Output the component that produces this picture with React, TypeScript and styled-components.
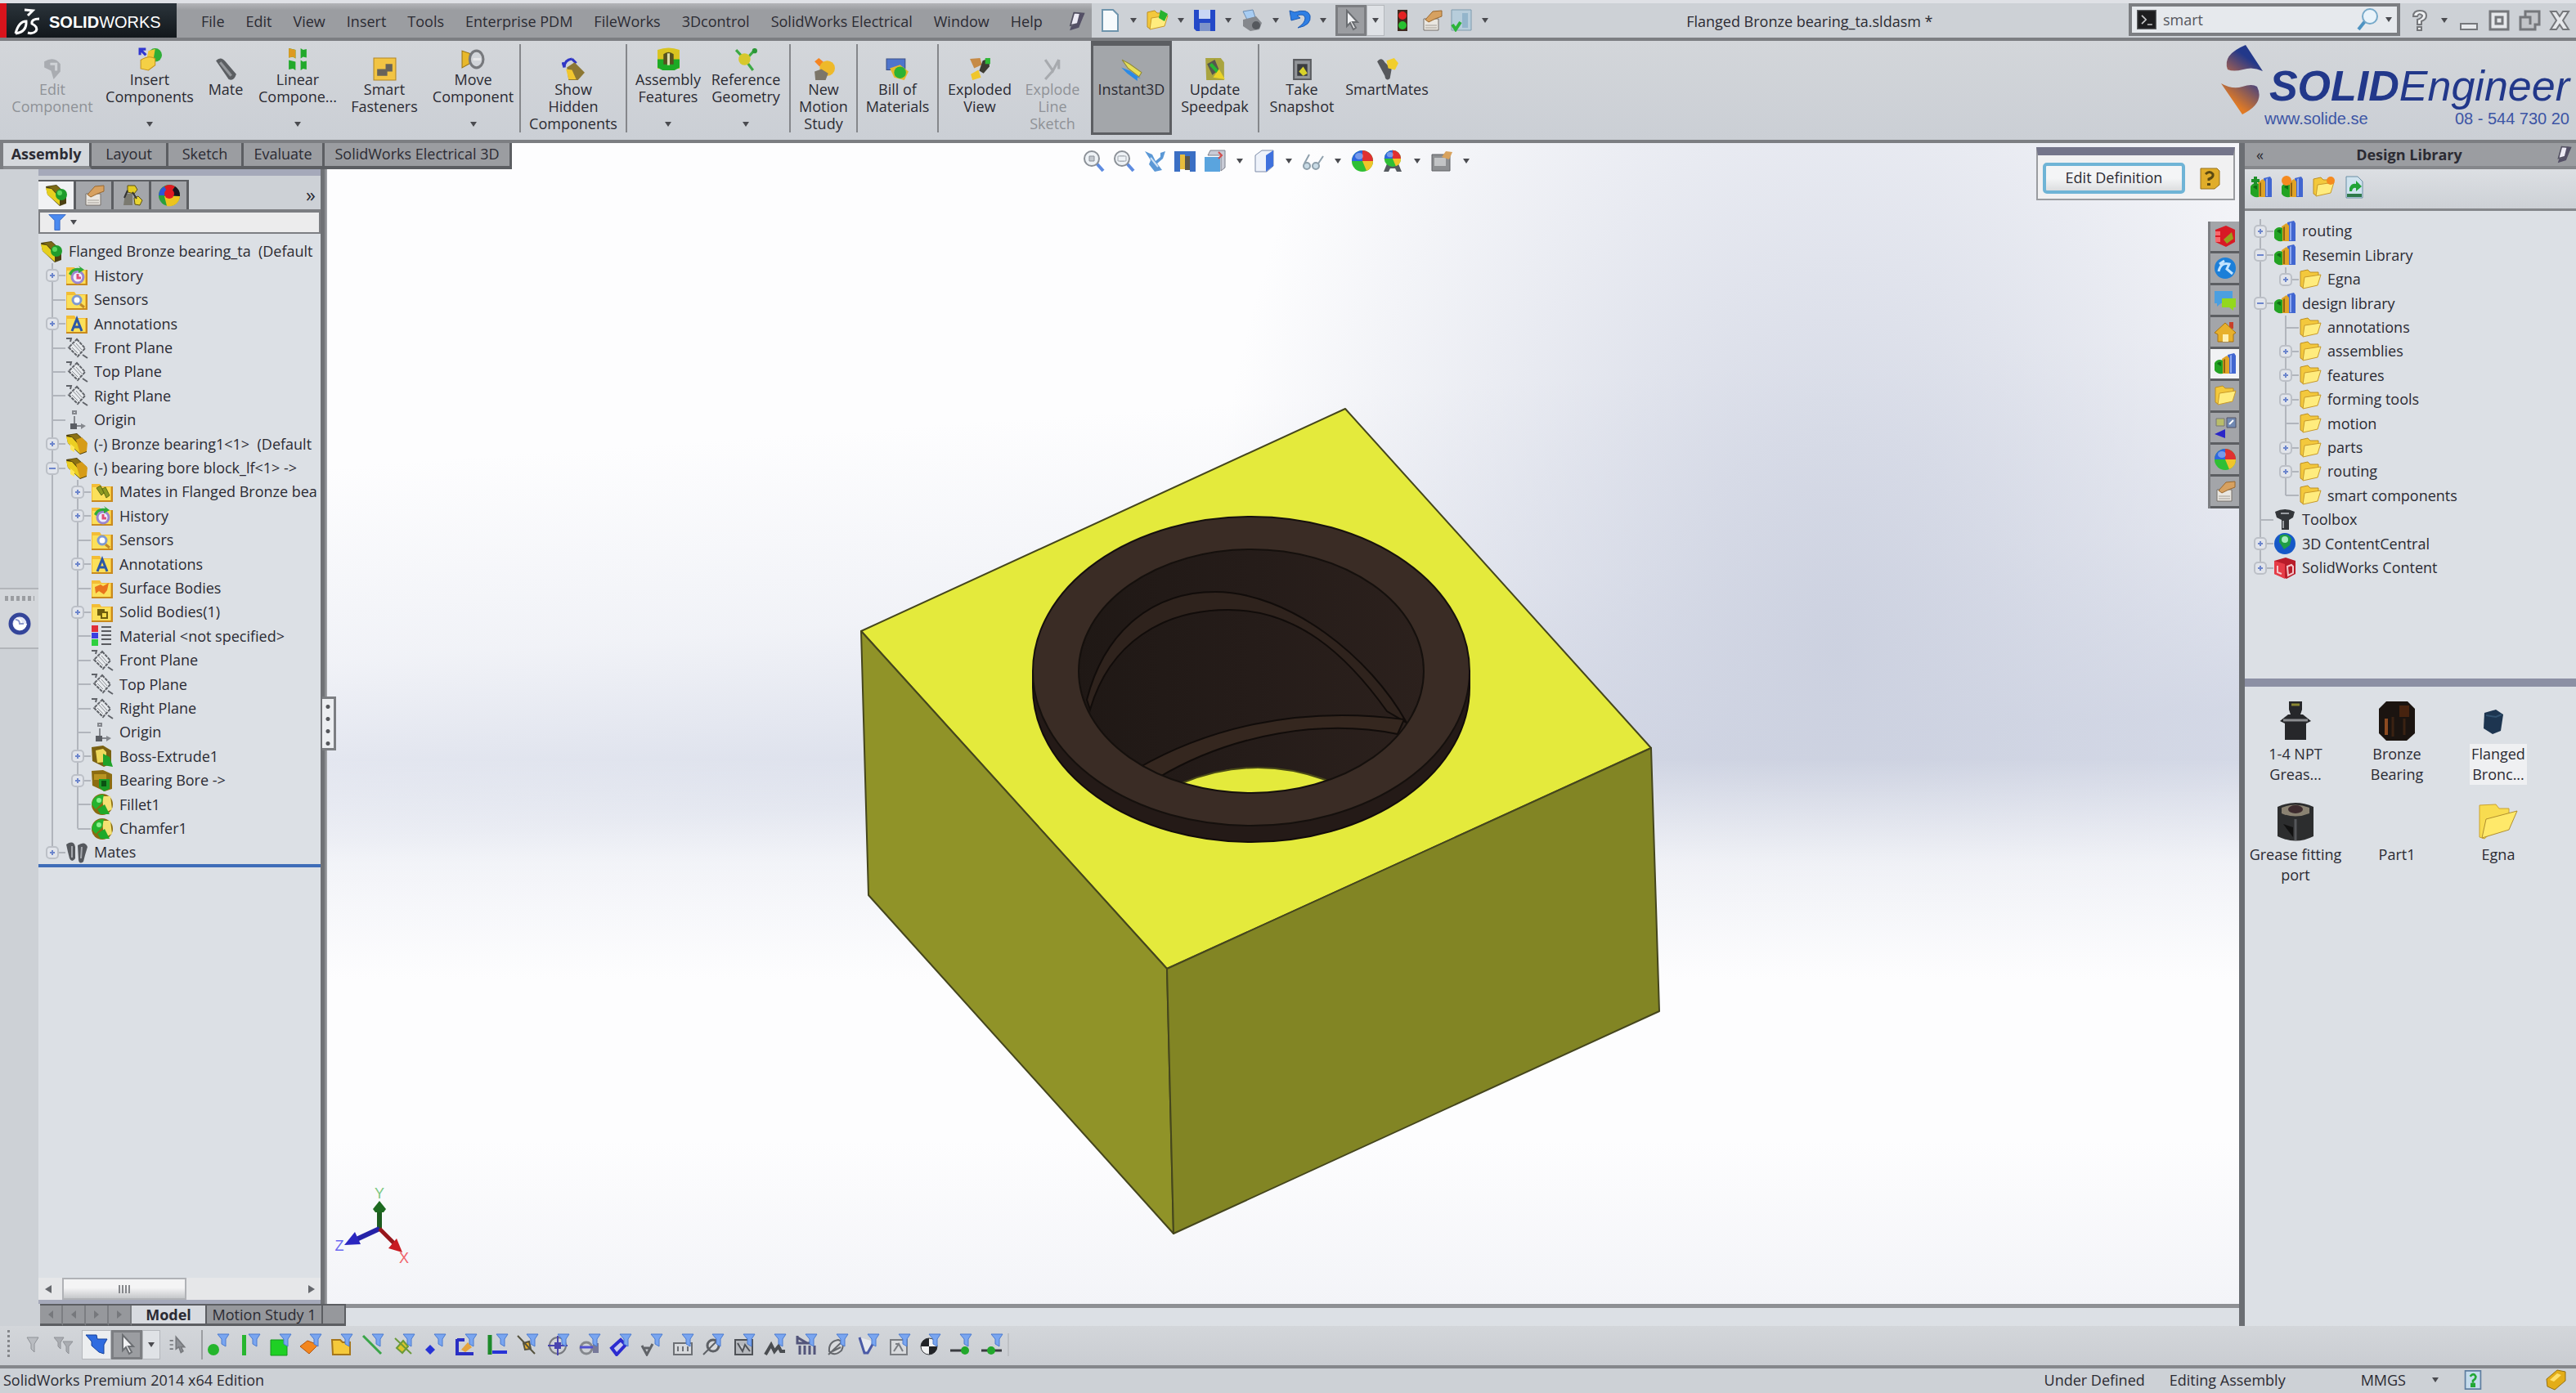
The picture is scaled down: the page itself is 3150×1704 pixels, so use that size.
import React from "react";
import styled, { createGlobalStyle, css } from "styled-components";

const ui = `"Open Sans", "Noto Sans", "Liberation Sans", sans-serif`;
const c = {
  chrome: "#cdd1d6",
  panel: "#dce0e5",
  bar: "#9b9da1",
  line: "#7c7e82",
  dark: "#5c5e62",
  text: "#2b2b33",
  lilac: "#a5a9ba",
};

const Global = createGlobalStyle`
  * { box-sizing: border-box; }
  body { margin: 0; background: ${c.chrome}; color: ${c.text}; font: 18px/21px ${ui}; }
  button { font: inherit; color: inherit; background: none; border: 0; padding: 0; margin: 0; }
  ul { list-style: none; margin: 0; padding: 0; }
  svg { display: block; flex: none; }
`;

/* ---------- drawings, all on a 28 x 28 grid ---------- */

const FolderBack = () => (
  <>
    <path d="M1 4h10l2 3h14v19H1z" fill="#f3bd35" />
    <path d="M2 8h22v16H2z" fill="#fbe05a" />
    <path d="M25 7h2v19H1v-2h24z" fill="#c98a1e" />
  </>
);
const Blade = () => (
  <path d="M13 1h14l-4 6v9l-5-3V7z" fill="#7aa6f0" stroke="#4a7ad0" strokeWidth="1" />
);
const Books = () => (
  <>
    <path d="M17 3l8-2 2 3v22h-9z" fill="#4166d0" />
    <path d="M20 4l2-1v22h-2z" fill="#8da8f0" />
    <path d="M10 8l6-4 3 3v19h-8z" fill="#e0a326" />
    <path d="M12 9l2-1v17h-2z" fill="#8d6312" />
    <path d="M1 13q4-6 10-3v16q-7 1-10-4z" fill="#23a323" />
    <path d="M4 14q2-3 5-2v5z" fill="#0f6d14" />
  </>
);
const OpenFolder = () => (
  <>
    <path d="M2 4l9-2 3 3h10v8L5 24 2 22z" fill="#f3c83c" stroke="#bd8f22" />
    <path d="M7 11l20-3-4 13-18 4z" fill="#ffec7e" stroke="#c99a2a" />
  </>
);
const Block = ({ a, b, d }: { a: string; b: string; d: string }) => (
  <>
    <path d="M1 3l13-2 12 11v12l-8 3L3 13z" fill={d} />
    <path d="M1 5l7 1 10 11v9L3 13z" fill={a} />
    <path d="M4 3l10-1 10 9-6 4-9-9z" fill={b} />
  </>
);
const Ball = () => (
  <>
    <circle cx="14" cy="14" r="13" fill="#2fbf35" />
    <path d="M14 14V1a13 13 0 0 0-13 13z" fill="#2e66df" />
    <path d="M14 14V1a13 13 0 0 1 13 13z" fill="#e03030" />
    <path d="M14 14h13a13 13 0 0 1-8 12z" fill="#f0c52a" />
    <ellipse cx="10" cy="8" rx="5" ry="4" fill="#fff" opacity=".35" />
  </>
);
const Hand = () => (
  <>
    <path d="M4 12h18v14H4z" fill="#e9e6e0" stroke="#77716a" />
    <path d="M6 20h14M6 23h14" stroke="#a39d96" />
    <path d="M6 13l9-10 11-1v7l-8 3-8 4z" fill="#d7a160" stroke="#99682f" />
  </>
);
const Lens = () => (
  <>
    <path d="M17 17l8 9" stroke="#5e8be0" strokeWidth="4" />
    <circle cx="11" cy="11" r="9" fill="#eef2f6" stroke="#8b9097" strokeWidth="2" />
    <path d="M8 8h6v6H8z" fill="#c3c8ce" stroke="#8b9097" />
  </>
);

const icons: Record<string, React.ReactNode> = {
  assembly: (
    <>
      <Block a="#e5cf1f" b="#7c6a15" d="#4d4112" />
      <circle cx="20" cy="13" r="7" fill="#1f9c2c" />
      <circle cx="18" cy="11" r="3" fill="#5ad65e" />
    </>
  ),
  part: (
    <>
      <Block a="#eccf22" b="#8b7114" d="#4d3e0c" />
      <path d="M13 9l7-3 7 7-1 10-8 3z" fill="#d69c18" />
      <path d="M6 14l5 4v6l-5-3z" fill="#ffe75a" />
    </>
  ),
  hand: <Hand />,
  config: (
    <>
      <path d="M6 12h9v14H4z" fill="#7b7a70" />
      <path d="M9 2h9l3 5-4 5-8-2z" fill="#e3cb22" stroke="#5c5110" />
      <path d="M17 17l5-2 5 5-3 6-6-1z" fill="#e9d532" stroke="#5c5110" />
      <path d="M15 10l5 8M9 8l-4 9" stroke="#333" strokeWidth="2" />
    </>
  ),
  ball: <Ball />,
  ball2: (
    <>
      <circle cx="14" cy="14" r="13" fill="#2a9f3c" />
      <path d="M14 14L1 14A13 13 0 0 1 8 3z" fill="#2e55d8" />
      <path d="M14 14L8 3a13 13 0 0 1 13 0z" fill="#e01a22" />
      <path d="M14 14l7-11a13 13 0 0 1 6 12z" fill="#1b1320" />
      <path d="M8 15h19a13 13 0 0 1-16 12z" fill="#edc41d" />
      <circle cx="14" cy="12" r="6" fill="#e01a22" />
    </>
  ),
  scene: (
    <>
      <path d="M3 27l5-12h12l5 12h-6l-2-4h-6l-2 4z" fill="#555a60" />
      <g transform="translate(3 0) scale(.78)"><Ball /></g>
    </>
  ),
  history: (
    <>
      <FolderBack />
      <circle cx="15" cy="16" r="7" fill="#eef" stroke="#9a86d0" strokeWidth="3" />
      <path d="M4 12q4-9 14-7l-2-3 7 5-7 4v-3q-7-1-9 6z" fill="#2faa38" />
      <path d="M15 12v5h4" stroke="#e04f7a" strokeWidth="3" fill="none" />
    </>
  ),
  sensors: (
    <>
      <FolderBack />
      <circle cx="14" cy="14" r="5" fill="#fff" stroke="#7f9ad2" strokeWidth="3" />
      <path d="M18 19l5 4" stroke="#c08a2a" strokeWidth="3" />
    </>
  ),
  annotations: (
    <>
      <FolderBack />
      <path d="M8 23l6-15 6 15M10 18h8" stroke="#2c57a6" strokeWidth="3" fill="none" />
    </>
  ),
  matesIn: (
    <>
      <FolderBack />
      <path d="M7 9l5-3 4 9-3 3zM14 10l4-2 5 10-4 3z" fill="#8c9a22" stroke="#5f6d14" strokeWidth="1" />
    </>
  ),
  surface: (
    <>
      <FolderBack />
      <path d="M5 12l7-3 3 2 7-4-2 9-4 5-6-4-4 3z" fill="#e8741c" />
    </>
  ),
  solid: (
    <>
      <FolderBack />
      <path d="M8 10h9v3h4v9h-9v-4H8z" fill="#6f5f0d" />
      <path d="M14 15h5v5h-5z" fill="#f5dd4a" />
    </>
  ),
  material: (
    <>
      <path d="M1 1h8v8H1z" fill="#e02f38" />
      <path d="M1 10h8v7H1z" fill="#3a3fe0" />
      <path d="M1 18h8v8H1z" fill="#2ed03f" />
      <path d="M13 3h12M13 8h12M13 13h12M13 18h12M13 24h12" stroke="#5a5c60" strokeWidth="2" />
    </>
  ),
  plane: (
    <>
      <path d="M14 3l10 11-9 10L4 13z" fill="#e8ebee" stroke="#5f6268" strokeWidth="2" strokeDasharray="4 1" />
      <path d="M9 8l10 11M13 8l7 8M8 13l7 7" stroke="#8b8e94" strokeWidth="1" />
      <path d="M1 2h6l-1 4M21 22l6 4" stroke="#5f6268" strokeWidth="2" fill="none" />
    </>
  ),
  origin: (
    <>
      <path d="M11 9v12h9M9 3h4v3H9z" stroke="#85888e" strokeWidth="2" fill="none" />
      <path d="M6 18h8v7H6z" fill="#5a5d63" />
      <path d="M19 18l6 3-6 4z" fill="#85888e" />
    </>
  ),
  extrude: (
    <>
      <path d="M1 3l14-2 10 6v16l-9 4L2 20z" fill="#7a6112" />
      <path d="M6 7l9-2 4 4v12l-11 1z" fill="#eed95c" />
      <path d="M15 11l8 4 4 12-12-2z" fill="#1fa32a" />
    </>
  ),
  bore: (
    <>
      <path d="M1 2l14-1 11 5v18l-9 3L2 20z" fill="#8c6c11" />
      <path d="M4 6h15v7H4z" fill="#b99421" />
      <path d="M10 12h13v12l-7 3-6-5z" fill="#1c9a26" />
      <path d="M13 14h6v7h-6z" fill="#0a5212" />
    </>
  ),
  fillet: (
    <>
      <circle cx="14" cy="14" r="13" fill="#8a6a10" />
      <path d="M14 4h10l2 16-10 5z" fill="#f4e172" />
      <path d="M1 14Q3 2 16 2l-2 10-8 8z" fill="#25b32f" />
      <path d="M8 20l9-6 6 12H12z" fill="#1fa929" />
      <circle cx="10" cy="9" r="3" fill="#8bf08c" />
    </>
  ),
  mates: (
    <>
      <path d="M1 4q9-6 11 3v14q-4 6-7 0l-2-8z" fill="#55585d" />
      <path d="M15 5q9-6 12 2l-3 10-2 8q-5 4-6-2z" fill="#55585d" />
      <path d="M8 6v14M20 7l-1 14" stroke="#a5a8ad" strokeWidth="2" />
    </>
  ),
  books: <Books />,
  booksAdd: (<><Books /><path d="M7 1v10M2 6h10" stroke="#1d8f28" strokeWidth="4" /></>),
  booksNew: (<><Books /><circle cx="7" cy="6" r="6" fill="#f58a1f" /></>),
  folder: <OpenFolder />,
  folderNew: (<><OpenFolder /><circle cx="23" cy="6" r="5" fill="#f58a1f" /></>),
  refresh: (
    <>
      <path d="M4 1h14l6 6v20H4z" fill="#cfe3ee" stroke="#6a8ea4" />
      <path d="M8 19v-4q2-6 8-5V6l7 7-7 6v-4q-4-1-5 4z" fill="#21a437" />
      <path d="M5 22h18v4H5z" fill="#2e7a4a" />
    </>
  ),
  toolbox: (
    <>
      <path d="M2 4q12-6 24 0l-2 7-5 3v12h-9V14l-6-3z" fill="#33363a" />
      <path d="M9 6h10M12 15v9" stroke="#9b9ea3" strokeWidth="2" />
    </>
  ),
  globe: (
    <>
      <circle cx="14" cy="14" r="13" fill="#1558c8" />
      <path d="M8 4q10-4 14 4l-2 8-7 5-6-9z" fill="#1f9e45" />
      <circle cx="14" cy="9" r="4" fill="#a3ecc0" />
    </>
  ),
  cube: (
    <>
      <path d="M1 5l14-4 12 4v16l-11 6L1 21z" fill="#b81c29" />
      <path d="M1 5l13 4v18L1 21z" fill="#e63c47" />
      <path d="M5 11v8l5 2M17 12l5-2 2 2v8l-6 3z" stroke="#f3c7ca" strokeWidth="2" fill="none" />
    </>
  ),
  resources: (
    <>
      <path d="M2 6l13-5 11 5v15l-11 6L2 21z" fill="#d81a25" />
      <path d="M2 8h6v5H2zM2 15h6v6H2z" fill="#f7686d" />
      <path d="M12 18l10-9 2 8-8 6z" fill="#9aa01c" />
    </>
  ),
  web: (
    <>
      <circle cx="14" cy="14" r="13" fill="#1c7fd8" />
      <path d="M6 18q3-12 13-9l-3 6 7 6M7 9l6-4" stroke="#c3e4ff" strokeWidth="3" fill="none" />
    </>
  ),
  chat: (
    <>
      <path d="M1 3h22v15H9l-5 4v-4H1z" fill="#4b9fe0" />
      <path d="M10 12h17v11h-3v4l-5-4h-9z" fill="#93d81f" />
    </>
  ),
  house: (
    <>
      <path d="M19 2h5v8h-5z" fill="#c8402a" />
      <path d="M1 15L14 3l13 12-3 2v9H5v-9z" fill="#e7b02c" stroke="#a87412" />
      <path d="M11 17h7v9h-7z" fill="#fff0b4" />
    </>
  ),
  palette: (
    <>
      <path d="M3 3h10v9H3z" fill="#b9bd6a" stroke="#777" />
      <path d="M16 2h11v12H16z" fill="#7189b2" stroke="#556" />
      <path d="M19 10l5-5" stroke="#fff" strokeWidth="2" />
      <path d="M1 22l13-6v11z" fill="#2a25c8" />
    </>
  ),
  editPart: (
    <>
      <path d="M4 5q12-7 19 3v9l-8 9-3-10-8-4z" fill="#a9acb1" />
      <path d="M11 8h7v8" stroke="#cfd2d6" strokeWidth="3" fill="none" />
    </>
  ),
  insert: (
    <>
      <path d="M2 9V2h7M2 2l7 7" stroke="#3137cf" strokeWidth="3" fill="none" />
      <circle cx="20" cy="9" r="8" fill="#2fae36" />
      <path d="M12 4l8-2-2 12h-8z" fill="#f0c734" />
      <path d="M3 15q9-6 17-2v8l-8 6-9-2z" fill="#f5d045" stroke="#c5941d" />
    </>
  ),
  mate: (
    <>
      <path d="M2 4q6-6 12 2l12 14q-3 9-9 6z" fill="#5b5e62" />
      <path d="M7 6l13 16" stroke="#93969a" strokeWidth="3" />
    </>
  ),
  pattern: (
    <>
      <path d="M3 1l8 2v10l-3-2-5 1zM3 15l8 2v10l-3-2-5 1z" fill="#22a92b" />
      <path d="M3 1l8 2v10l-3-2-5 1z" fill="#dd9a22" />
      <path d="M17 1l3 2 4-1v10l-4-1-3 2zM17 15l3 2 4-1v10l-4-1-3 2z" fill="#22a92b" />
    </>
  ),
  fasteners: (
    <>
      <path d="M1 1h26v26H1z" fill="#f2c443" stroke="#b48620" />
      <path d="M5 14h10V8h8v9h-6v5H5z" fill="#67635a" />
    </>
  ),
  move: (
    <>
      <path d="M1 4l9 3v12l-9 5z" fill="#e8b82a" stroke="#9a7414" />
      <ellipse cx="18" cy="14" rx="8" ry="10" fill="none" stroke="#77797d" strokeWidth="3" />
      <path d="M14 14h9" stroke="#e8e8ea" strokeWidth="3" />
    </>
  ),
  hidden: (
    <>
      <path d="M3 12q0-9 9-10M3 12L1 6M12 2l5 5" stroke="#3036c6" strokeWidth="3" fill="none" />
      <path d="M6 12l9-6 12 12-8 9H8z" fill="#8c7734" />
      <path d="M5 14l7 1 5 11H8z" fill="#f0c62e" />
    </>
  ),
  features: (
    <>
      <path d="M1 3q13-5 26 0v22H1z" fill="#d9c420" />
      <path d="M1 14h26v10l-6 3H7l-6-3z" fill="#1cab25" />
      <path d="M8 8q6-5 12 0v12H8z" fill="#55521f" />
      <path d="M14 7v14" stroke="#dcdcae" strokeWidth="3" />
    </>
  ),
  geometry: (
    <>
      <path d="M2 3l11 12L25 2M13 15l9 12" stroke="#3ba944" strokeWidth="3" fill="none" />
      <circle cx="12" cy="14" r="7" fill="#d7c82b" />
      <circle cx="24" cy="4" r="3" fill="#2a9736" />
    </>
  ),
  motion: (
    <>
      <path d="M3 5l5-4 6 5-5 5z" fill="#f58420" />
      <circle cx="18" cy="13" r="9" fill="#eeb92a" />
      <path d="M3 17l8-3 8 5-3 8H4z" fill="#7c7669" />
    </>
  ),
  bom: (
    <>
      <path d="M1 2h22v13H1z" fill="#4e74cc" stroke="#394f85" />
      <path d="M5 13l12-4 10 8-5 10-12-3z" fill="#e5b92c" />
      <circle cx="17" cy="18" r="7" fill="#2bb233" />
    </>
  ),
  explode: (
    <>
      <path d="M2 2l12-1 2 8-9 4z" fill="#c68a46" />
      <path d="M17 4l8-3v10l-7 8-5-3z" fill="#3c3a33" />
      <path d="M20 1h6v7h-6z" fill="#2eb736" />
      <path d="M3 20l9-5 3 9-10 3z" fill="#efc62c" />
    </>
  ),
  explodeLine: (
    <path d="M5 3l9 13 7-13M14 16L5 26M21 3v11" stroke="#a7aaae" strokeWidth="3" fill="none" />
  ),
  instant: (
    <>
      <path d="M3 3l9 5 14 10-3 5L10 13z" fill="#e7df5a" stroke="#8f8936" />
      <path d="M2 12l10 4 13 9-4-1v4l-12-9z" fill="#2b8ae6" />
    </>
  ),
  speedpak: (
    <>
      <path d="M3 1h18l4 5v21H4z" fill="#a9a43f" />
      <path d="M5 8l9-5 5 12-8 6z" fill="#55564f" />
      <path d="M9 8l9 10" stroke="#28b532" strokeWidth="4" />
      <path d="M12 24l7-10 7 12z" fill="#ead326" />
    </>
  ),
  snapshot: (
    <>
      <path d="M4 3h20v23H4z" fill="#929599" stroke="#5a5c60" strokeWidth="2" />
      <path d="M8 8h12v14H8z" fill="#3b3d40" />
      <path d="M10 17l5-6 5 8-5 3z" fill="#d9d22a" />
    </>
  ),
  smartMates: (
    <>
      <path d="M2 5q5-6 9 1l8 8-2 11q-5 4-6-3z" fill="#56585c" />
      <path d="M13 4l9-3 5 6-4 8-8-2z" fill="#f2ce2c" />
    </>
  ),
  doc: <path d="M5 1h13l6 6v20H5z" fill="#f6fafc" stroke="#6f95ad" strokeWidth="2" />,
  open: (<><OpenFolder /><path d="M18 1l9 5-4 9-7-4z" fill="#27b32f" /></>),
  save: (
    <>
      <path d="M1 1h26v26H4l-3-3z" fill="#2449c8" />
      <path d="M7 1h14v11H7z" fill="#c9d6f5" />
      <path d="M8 17h13v10H8z" fill="#7d93c9" />
    </>
  ),
  print: (
    <>
      <path d="M3 3l12-2 3 9-10 3z" fill="#a7ccf2" stroke="#6c8cb0" />
      <path d="M3 13l16-4 7 8-3 8-11 2-9-6z" fill="#85888d" />
      <circle cx="19" cy="20" r="5" fill="#55585d" />
    </>
  ),
  undo: (
    <path d="M2 2l2 12 11-3-4-3q9-3 10 3 0 6-9 12 17-3 15-15Q24-1 8 4z" fill="#2f7fe4" stroke="#1e5cb4" />
  ),
  cursor: <path d="M9 2v19l4-4 4 8 3-2-4-7h6z" fill="#f1f2f4" stroke="#6b6e72" strokeWidth="2" />,
  traffic: (
    <>
      <path d="M8 1h12v26H8z" fill="#3e2b20" />
      <circle cx="14" cy="8" r="5" fill="#e42222" />
      <circle cx="14" cy="20" r="5" fill="#27c030" />
    </>
  ),
  chart: (
    <>
      <path d="M2 1h24v25H2z" fill="#b7cddb" stroke="#7f9bae" />
      <path d="M15 5h7v18h-7z" fill="#93b5cb" />
      <path d="M3 19l4 6 6-9" stroke="#2cb43a" strokeWidth="4" fill="none" />
    </>
  ),
  pin: (
    <>
      <path d="M12 2l14 1-7 14-12 3z" fill="#eceaf4" stroke="#525061" strokeWidth="2" />
      <path d="M20 2l7 1-8 20-13 4 2-6 8-3z" fill="#545066" />
    </>
  ),
  lens: <Lens />,
  lens2: (<><Lens /><path d="M6 8h10v6H6z" fill="#eef2f6" stroke="#a4a9b0" /></>),
  lensBlue: (
    <>
      <path d="M3 26l8-10" stroke="#4e93c2" strokeWidth="4" />
      <circle cx="17" cy="10" r="9" fill="#e9f3fa" stroke="#76a9c9" strokeWidth="2" />
    </>
  ),
  rotate: (
    <>
      <path d="M2 2l9 4 4 8 6-5V4l6-2-3 9-7 6 6 8-9 2-7-9 2-5z" fill="#5b98d6" />
      <path d="M9 10l9 11" stroke="#cfe2f5" strokeWidth="2" />
    </>
  ),
  section: (
    <>
      <path d="M1 2h26v7H1z" fill="#3b6fc4" />
      <path d="M1 9h7v18H1zM20 9h7v18h-7z" fill="#3b6fc4" />
      <path d="M8 6h6v18H8z" fill="#e8bd3c" />
      <path d="M14 8h6v17h-6z" fill="#5a564a" />
    </>
  ),
  view: (
    <>
      <path d="M8 1h18v21l-5 4V7H5z" fill="#c8cbd6" stroke="#7d808c" />
      <path d="M1 9h19v18H1z" fill="#5aa4de" />
      <path d="M18 3l4 4-4 4" stroke="#d24b4b" strokeWidth="2" fill="none" />
    </>
  ),
  display: (
    <>
      <path d="M3 7l8-6h14v19l-8 7H3z" fill="#eef2fa" stroke="#7d8ba8" />
      <path d="M16 7l9-6v19l-9 7z" fill="#3f71dd" />
    </>
  ),
  glasses: (
    <>
      <circle cx="6" cy="20" r="4" fill="#c9dbe6" stroke="#8fa0ac" strokeWidth="2" />
      <circle cx="17" cy="20" r="4" fill="#c9dbe6" stroke="#8fa0ac" strokeWidth="2" />
      <path d="M3 17L9 6M20 17l6-9" stroke="#8fa0ac" strokeWidth="2" />
    </>
  ),
  settings: (
    <>
      <path d="M2 6h22v20H2z" fill="#8d8f92" stroke="#5f6164" />
      <path d="M5 10h14v10H5z" fill="#c2c4c6" />
      <path d="M14 9l5-7 8 1-4 9z" fill="#d8a25d" />
    </>
  ),
  keycard: (
    <>
      <path d="M3 2h20l3 3v17l-6 5H3z" fill="#e0ad2a" stroke="#97701a" />
      <path d="M9 9q5-5 9 0 1 4-5 6v2" stroke="#5c4a12" strokeWidth="3" fill="none" />
      <path d="M11 20h4v3h-4z" fill="#5c4a12" />
    </>
  ),
  terminal: (
    <>
      <path d="M0 0h28v28H0z" fill="#1d1d1f" stroke="#5f6164" strokeWidth="3" />
      <path d="M7 8l6 6-6 6M15 21h7" stroke="#c8c8ca" strokeWidth="2" fill="none" />
    </>
  ),
  help: (
    <path d="M6 9q0-7 8-7t8 6q0 5-6 7v4h-5v-6q6-2 6-5-4-4-6 1zM11 22h5v4h-5z" fill="#eef0f2" stroke="#75777b" strokeWidth="2" />
  ),
  min: <path d="M4 18h20v7H4z" fill="#e6e8eb" stroke="#75777b" strokeWidth="2" />,
  max: <path d="M3 3h22v22H3zM10 10h8v8h-8z" fill="#e6e8eb" stroke="#75777b" strokeWidth="3" />,
  restore: <path d="M9 3h17v16h-5v6H3V10h6zM9 10h6v9" fill="#c2c4c8" stroke="#75777b" strokeWidth="3" />,
  close: <path d="M3 3h7l4 6 4-6h7l-7 11 7 11h-7l-4-6-4 6H3l7-11z" fill="#e6e8eb" stroke="#75777b" strokeWidth="2" />,
  funnel: <path d="M1 2h26l-9 9v15h-8V11z" fill="#4a8af0" stroke="#2b5bb8" />,
  ring: (
    <>
      <circle cx="14" cy="14" r="11" fill="#e3e6f6" stroke="#34459a" strokeWidth="5" />
      <path d="M10 7q7 0 7 7h6q-1 6-7 8-9-1-10-8z" fill="#fff" />
      <path d="M9 9q5 0 5 5h5" stroke="#8d98cc" strokeWidth="2" fill="none" />
    </>
  ),
  statusHelp: (
    <>
      <path d="M3 1h22v26H3z" fill="#c5dcec" stroke="#5f7ea0" strokeWidth="2" />
      <path d="M10 9q5-6 8 0 0 4-4 6v3M12 20h4v3h-4z" stroke="#22a836" strokeWidth="3" fill="none" />
    </>
  ),
  tag: (
    <>
      <path d="M2 13L15 2l10 2v11L12 26 3 22z" fill="#e3ad18" stroke="#96700e" />
      <path d="M6 14l9-8 5 2-9 8z" fill="#ffe06a" />
    </>
  ),
  fOff: <path d="M7 5h14l-5 8v10l-4-4v-6z" fill="#b9bcc1" stroke="#8f9297" />,
  fClear: <path d="M3 5h12l-4 6v8l-3-3v-5zM14 10h12l-5 6v9l-3-3v-6z" fill="#aaadb2" stroke="#8f9297" />,
  fAll: <path d="M1 2h13l1 5h12l-4 7v11l-6-2-9-8v-5z" fill="#2f6ce0" stroke="#17429c" />,
  fCursor: <path d="M3 8h5M3 14h5M3 20h5M12 3v17l4-3 3 8 3-2-3-6h5z" fill="#8f9297" stroke="#77797d" strokeWidth="2" />,
};

const filterShapes: React.ReactNode[] = [
  <circle cx="8" cy="20" r="7" fill="#24b52c" />,
  <path d="M5 2h5v25H5z" fill="#27b62f" />,
  <path d="M2 8h20v19H2z" fill="#1fd024" stroke="#15951a" />,
  <path d="M1 16l9-7 13 5-11 11z" fill="#f3861e" stroke="#b3560d" />,
  <path d="M2 8h10l3 3h9v15H3z" fill="#f5c93b" stroke="#a6761a" strokeWidth="2" />,
  <path d="M2 3l22 22" stroke="#3aa548" strokeWidth="3" />,
  <path d="M3 6l20 19M13 9l6 7-7 8-7-6z" fill="#dcc62b" stroke="#6a9a3a" strokeWidth="2" />,
  <path d="M8 14l6 6-6 6-6-6z" fill="#2733d6" />,
  <><path d="M3 8h9M3 7v18h20" fill="none" stroke="#2a2fc4" strokeWidth="4" /><path d="M8 20l8-9 5 6-8 6z" fill="#e5a33c" /></>,
  <><path d="M5 2v24" stroke="#1d8a2a" strokeWidth="5" /><path d="M8 23h18" stroke="#2733d6" strokeWidth="4" /></>,
  <path d="M2 3l21 22M9 12l7-2 2 9-7 1z" fill="#e9b02b" stroke="#55523e" strokeWidth="2" />,
  <><circle cx="13" cy="15" r="10" fill="none" stroke="#77797f" strokeWidth="2" /><path d="M13 3v24M1 15h24" stroke="#4a45b0" strokeWidth="2" /><path d="M9 11h8v8H9z" fill="#4a45b0" /></>,
  <><circle cx="10" cy="18" r="7" fill="none" stroke="#85888d" strokeWidth="3" /><path d="M2 17h18" stroke="#5050d0" strokeWidth="3" /><path d="M18 12h7v12h-7z" fill="#77799a" /></>,
  <path d="M3 18L14 8l6 6-11 12z" fill="#c9ccef" stroke="#2b2bd0" strokeWidth="4" />,
  <path d="M2 15l6 11 7-13M5 18h6" fill="none" stroke="#606368" strokeWidth="3" />,
  <path d="M3 12h22v14H3zM8 16v6M14 16v6M20 16v6" fill="#d8dadd" stroke="#6d7075" strokeWidth="2" />,
  <><circle cx="14" cy="15" r="7" fill="#d8dadd" stroke="#5d6065" strokeWidth="3" /><path d="M2 26L20 8" stroke="#5d6065" strokeWidth="2" /></>,
  <path d="M3 8h21v18H3zM6 12l6 10 3-8 6 8" fill="#b6b9be" stroke="#4f5257" strokeWidth="2" />,
  <path d="M2 26l7-12 4 8 5-6 3 6h5" fill="none" stroke="#4a4d51" strokeWidth="4" />,
  <path d="M3 3v9h20M6 15v11M12 15v11M18 15v11M24 15v11M3 5l12 7" fill="none" stroke="#53557a" strokeWidth="3" />,
  <path d="M15 8q9 3 4 13-9 8-15 1Q3 10 15 8zM3 26l18-17M8 22l10-5" fill="#d8dadd" stroke="#65686d" strokeWidth="2" />,
  <path d="M3 5l6 19h4l8-14" fill="#e7e9ee" stroke="#4a5aa6" strokeWidth="3" />,
  <path d="M3 8h20v18H3zM7 22l6-9 5 9M9 13h5" fill="#d8dadd" stroke="#7b7e83" strokeWidth="2" />,
  <><circle cx="13" cy="16" r="10" fill="#f1f2f3" stroke="#3a3c40" /><path d="M13 16V6a10 10 0 0 0-10 10zM13 16h10a10 10 0 0 1-10 10z" fill="#222428" /></>,
  <><path d="M1 21h15" stroke="#3a3c40" strokeWidth="3" /><circle cx="19" cy="21" r="5" fill="#22a82c" /></>,
  <><path d="M1 21h25" stroke="#3a3c40" strokeWidth="3" /><circle cx="13" cy="21" r="5" fill="#22a82c" /></>,
];

const Icon = ({ name, size = 28 }: { name: string; size?: number }) => (
  <svg width={size} height={size} viewBox="0 0 28 28" aria-hidden="true">{icons[name]}</svg>
);

const Caret = () => (
  <svg width="8" height="6" viewBox="0 0 8 6" aria-hidden="true"><path d="M0 0h8L4 6z" fill="#4a4b50" /></svg>
);

/* ---------- shell ---------- */

const Page = styled.div`
  min-height: 100vh;
  display: flex;
  flex-direction: column;
`;

const TitleBar = styled.header`
  height: 50px;
  display: flex;
  border-top: 4px solid #dfe1e6;
  border-bottom: 4px solid ${c.line};
`;
const Brand = styled.div`
  width: 216px;
  display: flex;
  align-items: center;
  gap: 6px;
  padding: 4px 0 0 8px;
  border-left: 8px solid #d8141c;
  background: linear-gradient(#2b343b, #12171b);
  color: #fff;
  font: 20px/24px "Liberation Sans", Arial, sans-serif;
`;
const MenuBar = styled.nav`
  flex: none;
  display: flex;
  align-items: center;
  gap: 26px;
  padding: 2px 6px 0 30px;
  background: linear-gradient(#b3b4b8, ${c.bar} 20%);
`;
const QuickTools = styled.div`
  display: flex;
  align-items: center;
  gap: 8px;
  padding-left: 8px;
`;
const IconButton = styled.button<{ $w?: number }>`
  width: ${(p) => p.$w ?? 28}px;
  height: 28px;
  flex: none;
  display: flex;
  align-items: center;
  justify-content: center;
`;
const SelectTool = styled.div`
  height: 38px;
  display: flex;
  flex: none;
`;
const PressedButton = styled.button`
  width: 38px;
  display: flex;
  align-items: center;
  justify-content: center;
  background: ${c.bar};
  border: 3px solid ${c.line};
`;
const PressedMenu = styled.button`
  width: 22px;
  display: flex;
  align-items: center;
  justify-content: center;
  background: #dfe2e6;
  border: 1px solid #b4b7bc;
`;
const DocumentTitle = styled.h1`
  flex: 1;
  margin: 0;
  padding-top: 2px;
  align-self: center;
  text-align: center;
  font: inherit;
`;
const SearchBox = styled.div`
  width: 332px;
  height: 40px;
  display: flex;
  align-items: center;
  gap: 8px;
  padding: 0 6px;
  border: 4px solid ${c.line};
  background: #e6e9ed;
`;
const SearchInput = styled.input`
  flex: 1;
  min-width: 0;
  border: 0;
  padding: 0;
  background: none;
  font: inherit;
  color: #55575d;
`;
const WindowControls = styled.div`
  display: flex;
  align-items: center;
  gap: 9px;
  padding: 0 6px 0 10px;
`;

/* ---------- ribbon ---------- */

const Ribbon = styled.div`
  height: 125px;
  display: flex;
  background: linear-gradient(#d3d6da, #cbcfd5);
  border-bottom: 4px solid ${c.line};
`;
const RibbonButton = styled.button<{ $w: number; $menu?: boolean; $off?: boolean; $on?: boolean }>`
  width: ${(p) => p.$w}px;
  flex: none;
  display: flex;
  flex-direction: column;
  align-items: center;
  padding-top: ${(p) => (p.$menu ? 8 : 20)}px;
  white-space: pre-line;
  color: ${(p) => (p.$off ? "#8f9297" : c.text)};
  ${(p) => p.$on && css`
    height: 115px;
    margin: 0 4px;
    padding-top: 14px;
    background: #a3a6aa;
    border: 3px solid ${c.dark};
    border-top-width: 6px;
  `}
`;
const RibbonMenu = styled.span`
  margin-top: 20px;
`;
const Separator = styled.span`
  width: 2px;
  height: 108px;
  margin: 4px;
  flex: none;
  background: #85878b;
`;
const Partner = styled.div`
  margin-left: auto;
  display: flex;
  padding: 5px 8px 0 0;
  color: #22388a;
  font-family: "Liberation Sans", Arial, sans-serif;
`;
const PartnerText = styled.div`
  padding-top: 22px;
`;
const PartnerName = styled.div`
  font-size: 52px;
  line-height: 56px;
  font-style: italic;
  padding-left: 6px;
`;
const PartnerInfo = styled.div`
  display: flex;
  justify-content: space-between;
  font-size: 20px;
  line-height: 24px;
  color: #3c55a5;
`;

/* ---------- workspace ---------- */

const Workspace = styled.main`
  flex: 1;
  display: flex;
`;
const LeftSide = styled.div`
  width: 400px;
  flex: none;
  display: flex;
  flex-direction: column;
  z-index: 1;
`;
const CommandTabs = styled.div`
  height: 32px;
  display: flex;
  width: max-content;
  padding-left: 4px;
  background: ${c.line};
`;
const CommandTab = styled.button<{ $w: number; $active?: boolean }>`
  width: ${(p) => p.$w}px;
  padding-bottom: 2px;
  background: ${(p) => (p.$active ? "#d5d8dc" : c.bar)};
  border-right: 3px solid ${c.dark};
  border-bottom: 4px solid ${(p) => (p.$active ? "#8a8c90" : c.dark)};
  font-weight: ${(p) => (p.$active ? 700 : 400)};
`;
const LeftBody = styled.div`
  flex: 1;
  display: flex;
`;
const Gutter = styled.div`
  width: 47px;
  padding-top: 512px;
`;
const GutterBar = styled.div`
  height: 75px;
  padding-top: 8px;
  display: flex;
  flex-direction: column;
  align-items: center;
  gap: 14px;
  border: solid #b2b5ba;
  border-width: 2px 0;
  background: #d3d6da;
`;
const Grip = styled.span`
  width: 36px;
  height: 6px;
  background: repeating-linear-gradient(90deg, #9b9da1 0 4px, #d3d6da 4px 7px);
`;
const FeaturePanel = styled.div`
  width: 345px;
  display: flex;
  flex-direction: column;
  background: ${c.panel};
`;
const PanelTop = styled.div`
  height: 49px;
  display: flex;
  align-items: flex-end;
  background: ${c.chrome};
  border-top: 8px solid ${c.lilac};
`;
const PanelTab = styled.button<{ $active?: boolean }>`
  width: 46px;
  height: 36px;
  display: flex;
  align-items: center;
  justify-content: center;
  background: ${(p) => (p.$active ? "#f1f2f4" : "#a4a6aa")};
  border: solid ${c.dark};
  border-width: 2px 3px 0 0;
`;
const More = styled.button`
  margin: 0 6px 8px auto;
  font-size: 24px;
`;
const FilterField = styled.div`
  height: 30px;
  flex: none;
  display: flex;
  align-items: center;
  gap: 5px;
  padding-left: 10px;
  background: #ececed;
  border: 2px solid ${c.line};
  border-top-width: 4px;
`;
const BlankInput = styled.input`
  flex: 1;
  min-width: 0;
  border: 0;
  padding: 0;
  background: none;
  font: inherit;
`;
const TreeRow = styled.li<{ $root?: boolean }>`
  height: 29px;
  display: flex;
  align-items: center;
  padding-left: ${(p) => (p.$root ? 2 : 0)}px;
  white-space: pre;
  &:nth-child(5n + 2), &:nth-child(5n + 4) { height: 30px; }
`;
const TreeLabel = styled.span`
  padding-left: 7px;
`;
const Guide = styled.span<{ $last?: boolean; $arm?: boolean }>`
  width: ${(p) => (p.$arm ? 33 : 31)}px;
  align-self: stretch;
  flex: none;
  display: flex;
  align-items: center;
  padding-left: 9px;
  background:
    linear-gradient(#b1b5bc, #b1b5bc) 16px 0 / 2px ${(p) => (p.$last ? "50%" : "100%")} no-repeat,
    linear-gradient(#b1b5bc, #b1b5bc) 17px 50% / ${(p) => (p.$arm ? 16 : 0)}px 2px no-repeat;
`;
const FeatureTree = styled.ul`
  padding: 7px 0 0;
  border-bottom: 4px solid #3f6db8;
`;
const ScrollTrack = styled.div`
  margin-top: auto;
  height: 32px;
  flex: none;
  display: flex;
  align-items: stretch;
  gap: 12px;
  padding: 0 6px;
  background: #e6e7e9;
  border-bottom: 5px solid ${c.lilac};
`;
const ScrollArrow = styled.button`
  width: 11px;
  display: flex;
  align-items: center;
  justify-content: center;
`;
const ScrollThumb = styled.div`
  width: 152px;
  margin-right: auto;
  display: flex;
  align-items: center;
  justify-content: center;
  border: 2px solid #b0b2b6;
  background: linear-gradient(#f4f4f5 45%, #c5c7ca);
`;
const ThumbGrip = styled.span`
  width: 14px;
  height: 10px;
  background: repeating-linear-gradient(90deg, #85878b 0 2px, transparent 2px 4px);
`;
const Splitter = styled.div`
  width: 8px;
  position: relative;
  background: linear-gradient(90deg, #6f7175 50%, #a7a9ad);
`;
const SplitHandle = styled.button`
  position: absolute;
  left: 2px;
  top: 645px;
  width: 17px;
  height: 66px;
  background: radial-gradient(circle, #55575b 2px, transparent 3px) 0 2px / 14px 15px repeat-y #eceef1;
  border: 3px solid ${c.line};
  border-left: 0;
`;
const StudyTabs = styled.div`
  height: 27px;
  width: max-content;
  margin-left: 49px;
  display: flex;
  background: #8d8f93;
  border-top: 2px solid ${c.dark};
`;
const StudyTab = styled.button<{ $w: number; $active?: boolean }>`
  width: ${(p) => p.$w}px;
  display: flex;
  align-items: center;
  justify-content: center;
  white-space: nowrap;
  line-height: 21px;
  background: ${(p) => (p.$active ? "#d8dbe0" : "#96989c")};
  border: solid ${c.dark};
  border-width: 0 2px 3px 0;
  font-weight: ${(p) => (p.$active ? 700 : 400)};
`;
const NavTab = styled(StudyTab)`
  border-right-color: #7c7e82;
`;

/* ---------- viewport ---------- */

const Center = styled.section`
  flex: 1;
  min-width: 0;
  display: flex;
  flex-direction: column;
`;
const Viewport = styled.div`
  flex: 1;
  position: relative;
  background:
    linear-gradient(rgba(253, 253, 254, 0) 53%, rgba(253, 253, 254, 0.7) 62%, #fdfdfe 72%, #fdfdfe 86%, #f3f4f8 100%),
    radial-gradient(ellipse 33% 80% at 79% 44%, rgba(203, 208, 223, 0.95) 0%, rgba(204, 209, 224, 0.75) 25%, rgba(204, 209, 224, 0.3) 70%, rgba(204, 209, 224, 0) 100%),
    linear-gradient(176deg, rgba(212, 217, 231, 0) 25%, rgba(212, 217, 231, 0.3) 40%, rgba(212, 217, 231, 0.9) 54%),
    #fdfdfe;
`;
const ModelCanvas = styled.svg`
  position: absolute;
  inset: 0;
  width: 100%;
  height: 100%;
`;
const ViewTools = styled.div`
  position: absolute;
  top: 8px;
  left: 0;
  right: 14px;
  display: flex;
  justify-content: center;
  gap: 9px;
`;
const DefinitionBox = styled.div`
  position: absolute;
  top: 5px;
  right: 5px;
  width: 243px;
  height: 65px;
  display: flex;
  align-items: center;
  gap: 16px;
  padding: 2px 0 0 6px;
  background: #f1f1f2;
  border: 2px solid #9a9ca0;
  border-top: 10px solid #74758a;
`;
const DefinitionButton = styled.button`
  width: 174px;
  height: 38px;
  border: 4px solid #6fb4d6;
  border-radius: 5px;
  background: linear-gradient(#f4f5f6 50%, #dcdee0);
`;
const TaskTabs = styled.div`
  position: absolute;
  top: 96px;
  right: 0;
  width: 38px;
  border-left: 3px solid ${c.line};
`;
const TaskTab = styled.button<{ $active?: boolean }>`
  width: 100%;
  height: 39px;
  display: flex;
  align-items: center;
  justify-content: center;
  background: ${(p) => (p.$active ? "#f1f2f4" : "#a3a5a9")};
  border-bottom: 3px solid ${c.dark};
`;
const CenterFoot = styled.div`
  height: 27px;
  background: ${c.panel};
  border-top: 5px solid #8e9094;
`;

/* ---------- library ---------- */

const Library = styled.aside`
  width: 412px;
  flex: none;
  display: flex;
  flex-direction: column;
  background: ${c.panel};
  border-left: 7px solid #6b6e73;
`;
const LibraryHead = styled.div`
  height: 32px;
  display: flex;
  align-items: center;
  justify-content: space-between;
  padding: 0 6px 0 14px;
  background: ${c.bar};
  border-bottom: 4px solid #85878b;
`;
const LibraryTitle = styled.h2`
  margin: 0;
  font: inherit;
  font-weight: 700;
`;
const LibraryTools = styled.div`
  height: 51px;
  display: flex;
  align-items: center;
  gap: 10px;
  padding: 0 0 4px 6px;
  background: linear-gradient(#dcdfe3, ${c.chrome});
  border-bottom: 3px solid #85878b;
`;
const LibraryTree = styled.ul`
  height: 572px;
  padding: 10px 0 0 2px;
`;
const Thumbs = styled.ul`
  flex: 1;
  display: grid;
  grid-template-columns: repeat(3, 124px);
  grid-auto-rows: 123px;
  padding-top: 17px;
  border-top: 10px solid #8c90a4;
`;
const Thumb = styled.li`
  display: flex;
  flex-direction: column;
  align-items: center;
  text-align: center;
  line-height: 25px;
  white-space: pre-line;
`;
const ThumbLabel = styled.span<{ $on?: boolean }>`
  margin-top: 3px;
  padding: 0 2px;
  background: ${(p) => (p.$on ? "#eff0f2" : "none")};
`;

/* ---------- bottom bars ---------- */

const FilterBar = styled.div`
  height: 52px;
  display: flex;
  align-items: center;
  padding: 0 0 2px 9px;
  background: linear-gradient(#d3d6da, #cacdd2);
  border-bottom: 4px solid #85878b;
`;
const BarGrip = styled.span`
  width: 3px;
  height: 36px;
  margin-right: 14px;
  background: repeating-linear-gradient(#85878b 0 3px, transparent 3px 6px);
`;
const BarLead = styled.div`
  display: flex;
  align-items: center;
  width: 222px;
  gap: 9px;
  border-right: 2px solid #9b9da1;
`;
const FilterAll = styled.div`
  height: 36px;
  display: flex;
`;
const LitButton = styled.button`
  width: 36px;
  display: flex;
  align-items: center;
  justify-content: center;
  background: #eceef0;
  border: 1px solid #b4b7bc;
`;
const FilterGrid = styled.div`
  width: 986px;
  display: grid;
  grid-template-columns: repeat(26, 1fr);
  justify-items: center;
  border-right: 2px solid #bdc0c4;
`;
const StatusBar = styled.footer`
  height: 30px;
  display: flex;
  align-items: center;
  padding: 0 10px 2px 4px;
`;
const StatusText = styled.span<{ $gap?: number }>`
  margin-right: ${(p) => p.$gap ?? 30}px;
`;
const Push = styled.span`
  flex: 1;
`;

/* ---------- data ---------- */

const menus = ["File", "Edit", "View", "Insert", "Tools", "Enterprise PDM", "FileWorks", "3Dcontrol", "SolidWorks Electrical", "Window", "Help"];

type Cmd = { t: string; i: string; w: number; menu?: boolean; off?: boolean; on?: boolean } | null;
const commands: Cmd[] = [
  { t: "Edit\nComponent", i: "editPart", w: 128, off: true },
  { t: "Insert\nComponents", i: "insert", w: 110, menu: true },
  { t: "Mate", i: "mate", w: 76 },
  { t: "Linear\nCompone...", i: "pattern", w: 100, menu: true },
  { t: "Smart\nFasteners", i: "fasteners", w: 112 },
  { t: "Move\nComponent", i: "move", w: 105, menu: true },
  null,
  { t: "Show\nHidden\nComponents", i: "hidden", w: 120 },
  null,
  { t: "Assembly\nFeatures", i: "features", w: 92, menu: true },
  { t: "Reference\nGeometry", i: "geometry", w: 98, menu: true },
  null,
  { t: "New\nMotion\nStudy", i: "motion", w: 72 },
  null,
  { t: "Bill of\nMaterials", i: "bom", w: 89 },
  null,
  { t: "Exploded\nView", i: "explode", w: 92 },
  { t: "Explode\nLine\nSketch", i: "explodeLine", w: 86, off: true },
  { t: "Instant3D", i: "instant", w: 99, on: true },
  { t: "Update\nSpeedpak", i: "speedpak", w: 97 },
  null,
  { t: "Take\nSnapshot", i: "snapshot", w: 96 },
  { t: "SmartMates", i: "smartMates", w: 112 },
];

type Node = [label: string, icon: string, level: number, sign?: "+" | "-", last?: boolean];
const features: Node[] = [
  ["Flanged Bronze bearing_ta  (Default", "assembly", 0],
  ["History", "history", 1, "+"],
  ["Sensors", "sensors", 1],
  ["Annotations", "annotations", 1, "+"],
  ["Front Plane", "plane", 1],
  ["Top Plane", "plane", 1],
  ["Right Plane", "plane", 1],
  ["Origin", "origin", 1],
  ["(-) Bronze bearing1<1>  (Default", "part", 1, "+"],
  ["(-) bearing bore block_lf<1> ->", "part", 1, "-"],
  ["Mates in Flanged Bronze bea", "matesIn", 2, "+"],
  ["History", "history", 2, "+"],
  ["Sensors", "sensors", 2],
  ["Annotations", "annotations", 2, "+"],
  ["Surface Bodies", "surface", 2],
  ["Solid Bodies(1)", "solid", 2, "+"],
  ["Material <not specified>", "material", 2],
  ["Front Plane", "plane", 2],
  ["Top Plane", "plane", 2],
  ["Right Plane", "plane", 2],
  ["Origin", "origin", 2],
  ["Boss-Extrude1", "extrude", 2, "+"],
  ["Bearing Bore ->", "bore", 2, "+"],
  ["Fillet1", "fillet", 2],
  ["Chamfer1", "fillet", 2, undefined, true],
  ["Mates", "mates", 1, "+", true],
];
const library: Node[] = [
  ["routing", "books", 1, "+"],
  ["Resemin Library", "books", 1, "-"],
  ["Egna", "folder", 2, "+", true],
  ["design library", "books", 1, "-"],
  ["annotations", "folder", 2],
  ["assemblies", "folder", 2, "+"],
  ["features", "folder", 2, "+"],
  ["forming tools", "folder", 2, "+"],
  ["motion", "folder", 2],
  ["parts", "folder", 2, "+"],
  ["routing", "folder", 2, "+"],
  ["smart components", "folder", 2, undefined, true],
  ["Toolbox", "toolbox", 1],
  ["3D ContentCentral", "globe", 1, "+"],
  ["SolidWorks Content", "cube", 1, "+", true],
];

const Sign = ({ sign }: { sign: "+" | "-" }) => (
  <svg width="16" height="16" viewBox="0 0 16 16" aria-hidden="true">
    <rect x="1" y="1" width="14" height="14" rx="4" fill="#e1e4ea" stroke="#bcc0c7" strokeWidth="2" />
    <path d={sign === "+" ? "M5 8h6M8 5v6" : "M4 8h8"} stroke="#6d86cc" strokeWidth="2" />
  </svg>
);
const Rows = ({ nodes }: { nodes: Node[] }) => (
  <>
    {nodes.map(([label, icon, level, sign, last], i) => (
      <TreeRow key={i} $root={level === 0}>
        {level === 2 && <Guide />}
        {level > 0 && <Guide $arm $last={last}>{sign && <Sign sign={sign} />}</Guide>}
        <Icon name={icon} />
        <TreeLabel>{label}</TreeLabel>
      </TreeRow>
    ))}
  </>
);

const Tools = ({ items }: { items: string[] }) => (
  <>
    {items.map((n, i) =>
      n === "." ? (
        <IconButton key={i} $w={14} aria-label="More options"><Caret /></IconButton>
      ) : (
        <IconButton key={i} aria-label={n}><Icon name={n} /></IconButton>
      )
    )}
  </>
);

const Model = () => (
  <ModelCanvas viewBox="400 175 2336 1420" preserveAspectRatio="xMidYMid meet" role="img" aria-label="Bearing block assembly">
    <defs>
      <clipPath id="bore"><ellipse cx="1529" cy="821" rx="211" ry="149" /></clipPath>
      <linearGradient id="wall"><stop offset="0" stopColor="#1f1815" /><stop offset=".5" stopColor="#251c19" /><stop offset="1" stopColor="#2c211d" /></linearGradient>
    </defs>
    <g stroke="#45461d" strokeWidth="2" strokeLinejoin="round">
      <path d="M1644 500L2018 915 1426 1185 1052 772z" fill="#e4ea3c" />
      <path d="M1052 772l374 413 8 324-373-414z" fill="#909328" />
      <path d="M1426 1185l592-270 10 322-594 272z" fill="#828524" />
    </g>
    <path d="M1262 821v20a267 189 0 0 0 534 0v-20z" fill="#241a17" stroke="#120c0a" strokeWidth="2" />
    <ellipse cx="1529" cy="821" rx="267" ry="189" fill="#3a2c25" stroke="#15100d" strokeWidth="2" />
    <g clipPath="url(#bore)">
      <rect x="1310" y="665" width="440" height="312" fill="url(#wall)" />
      <path d="M1328 856C1350 770 1410 724 1485 724c90 0 190 80 234 160l-24-14c-50-70-110-124-194-124-80 0-145 40-169 122z" fill="#2f231d" stroke="#110c0a" strokeWidth="2" />
      <path d="M1390 940c80-46 190-78 326-60l-8 18c-90-18-200-2-294 54z" fill="#35271f" stroke="#110c0a" strokeWidth="2" />
      <path d="M1444 958q88-36 176-4v30h-176z" fill="#e4ea3c" stroke="#4a4a17" strokeWidth="2" />
    </g>
    <ellipse cx="1529" cy="821" rx="211" ry="149" fill="none" stroke="#15100d" strokeWidth="2" />
    <g fontFamily="Liberation Sans" fontSize="18" textAnchor="middle">
      <path d="M463 1504v-26" stroke="#1d5c1f" strokeWidth="6" />
      <path d="M463 1469l8 10-3 4h-10l-3-4z" fill="#1d6a20" />
      <path d="M463 1503l-28 13" stroke="#2522a8" strokeWidth="6" />
      <path d="M420 1523l13-16 7 15z" fill="#2a26c0" />
      <path d="M463 1503l19 19" stroke="#96161c" strokeWidth="5" />
      <path d="M491 1532l-17-5 10-12z" fill="#c81a22" />
      <text x="463" y="1466" fill="#7cc880">Y</text>
      <text x="414" y="1530" fill="#6a68f0">Z</text>
      <text x="493" y="1545" fill="#f0636a">X</text>
    </g>
  </ModelCanvas>
);

const thumbs: { label: string; on?: boolean; art: React.ReactNode }[] = [
  {
    label: "1-4 NPT\nGreas...",
    art: <><path d="M17 1h16v10l-2 6h3l10 8-6 3v20H12V28l-6-3 10-8h3l-2-6z" fill="#26272a" /><path d="M10 24h30" stroke="#8b8d90" strokeWidth="3" /><path d="M20 5h10" stroke="#8a8632" strokeWidth="3" /></>,
  },
  {
    label: "Bronze\nBearing",
    art: <><path d="M12 1h26l9 9v30l-10 9H12l-9-9V10z" fill="#1b1410" /><path d="M12 22v20" stroke="#8c4a20" strokeWidth="4" /><path d="M28 6h12v14H28z" fill="#47230f" /><path d="M20 20v24M34 22v20" stroke="#3b2212" strokeWidth="3" /></>,
  },
  {
    label: "Flanged\nBronc...",
    on: true,
    art: <><path d="M8 15l14-4 9 6-3 20-10 4-11-7z" fill="#1d3550" /><path d="M10 18l12 2 7-3" stroke="#31516f" strokeWidth="2" fill="none" /></>,
  },
  {
    label: "Grease fitting\nport",
    art: <><path d="M3 7Q25-3 47 7v36q-22 11-44 0z" fill="#2c2d2e" /><path d="M8 8q17-7 34 0v7q-17 7-34 0z" fill="#8a8272" /><ellipse cx="25" cy="10" rx="9" ry="5" fill="#3d2b2e" /><path d="M25 22v26" stroke="#55575a" strokeWidth="3" /><path d="M10 28l12 4v12z" fill="#111" /></>,
  },
  { label: "Part1", art: null },
  {
    label: "Egna",
    art: <><path d="M2 5l20-1 4 5h12v10L8 46l-6-2z" fill="#f8dc50" stroke="#caa233" /><path d="M10 22l38-10-10 23L5 45z" fill="#ffe96a" stroke="#b08f2f" /></>,
  },
];

export default function App() {
  return (
    <Page>
      <Global />
      <TitleBar>
        <Brand>
          <svg width="38" height="34" viewBox="0 0 38 34" aria-hidden="true">
            <path d="M14 2l10 1-6 6M3 31q14-2 13-15-9 0-13 15M32 13q-10 0-9 6 8 4 5 9-4 4-10 2" stroke="#fff" strokeWidth="3" fill="none" />
          </svg>
          <span><b>SOLID</b>WORKS</span>
        </Brand>
        <MenuBar>
          {menus.map((m) => <button key={m}>{m}</button>)}
          <IconButton aria-label="Pin menu"><Icon name="pin" size={24} /></IconButton>
        </MenuBar>
        <QuickTools>
          <Tools items={["doc", ".", "open", ".", "save", ".", "print", ".", "undo", "."]} />
          <SelectTool>
            <PressedButton aria-label="Select"><Icon name="cursor" /></PressedButton>
            <PressedMenu aria-label="Select options"><Caret /></PressedMenu>
          </SelectTool>
          <Tools items={["traffic", "hand", "chart", "."]} />
        </QuickTools>
        <DocumentTitle>Flanged Bronze bearing_ta.sldasm *</DocumentTitle>
        <SearchBox>
          <Icon name="terminal" size={24} />
          <SearchInput aria-label="Search" defaultValue="smart" />
          <Icon name="lensBlue" />
          <Caret />
        </SearchBox>
        <WindowControls>
          <Tools items={["help", ".", "min", "max", "restore", "close"]} />
        </WindowControls>
      </TitleBar>

      <Ribbon>
        {commands.map((k, i) =>
          k ? (
            <RibbonButton key={i} $w={k.w} $menu={k.menu} $off={k.off} $on={k.on}>
              <Icon name={k.i} size={29} />
              {k.t}
              {k.menu && <RibbonMenu><Caret /></RibbonMenu>}
            </RibbonButton>
          ) : (
            <Separator key={i} />
          )
        )}
        <Partner>
          <svg width="54" height="86" viewBox="0 0 54 86" aria-hidden="true">
            <defs>
              <linearGradient id="up" x1="0" y1="1" x2="1" y2="0"><stop offset="0" stopColor="#a5604f" /><stop offset=".55" stopColor="#22388a" /></linearGradient>
              <linearGradient id="down" x1="0" y1="1" x2="1" y2="0"><stop offset=".35" stopColor="#e07a25" /><stop offset="1" stopColor="#3c3f85" /></linearGradient>
            </defs>
            <path d="M31 0l21 32q-12-6-24-2-12 3-19 0Q2 12 31 0z" fill="url(#up)" />
            <path d="M1 47q14 8 26 4 12-4 18 0 10 20-18 34z" fill="url(#down)" />
          </svg>
          <PartnerText>
            <PartnerName><b>SOLID</b>Engineer</PartnerName>
            <PartnerInfo><span>www.solide.se</span><span>08 - 544 730 20</span></PartnerInfo>
          </PartnerText>
        </Partner>
      </Ribbon>

      <Workspace>
        <LeftSide>
          <CommandTabs>
            <CommandTab $w={108} $active>Assembly</CommandTab>
            <CommandTab $w={94}>Layout</CommandTab>
            <CommandTab $w={92}>Sketch</CommandTab>
            <CommandTab $w={99}>Evaluate</CommandTab>
            <CommandTab $w={229}>SolidWorks Electrical 3D</CommandTab>
          </CommandTabs>
          <LeftBody>
            <Gutter>
              <GutterBar><Grip /><Icon name="ring" /></GutterBar>
            </Gutter>
            <FeaturePanel>
              <PanelTop>
                <PanelTab $active aria-label="Feature tree"><Icon name="assembly" /></PanelTab>
                <PanelTab aria-label="Properties"><Icon name="hand" /></PanelTab>
                <PanelTab aria-label="Configurations"><Icon name="config" /></PanelTab>
                <PanelTab aria-label="Display"><Icon name="ball2" /></PanelTab>
                <More aria-label="Expand">»</More>
              </PanelTop>
              <FilterField>
                <Icon name="funnel" size={22} />
                <Caret />
                <BlankInput aria-label="Filter tree" />
              </FilterField>
              <FeatureTree><Rows nodes={features} /></FeatureTree>
              <ScrollTrack>
                <ScrollArrow aria-label="Scroll left">
                  <svg width="8" height="10" viewBox="0 0 8 10"><path d="M8 0v10L0 5z" fill="#66686d" /></svg>
                </ScrollArrow>
                <ScrollThumb><ThumbGrip /></ScrollThumb>
                <ScrollArrow aria-label="Scroll right">
                  <svg width="8" height="10" viewBox="0 0 8 10"><path d="M0 0v10l8-5z" fill="#66686d" /></svg>
                </ScrollArrow>
              </ScrollTrack>
            </FeaturePanel>
            <Splitter><SplitHandle aria-label="Collapse panel" /></Splitter>
          </LeftBody>
          <StudyTabs>
            {["First", "Previous", "Next", "Last"].map((s) => (
              <NavTab key={s} $w={28} aria-label={s}>
                <svg width="6" height="10" viewBox="0 0 6 10"><path d={s === "First" || s === "Previous" ? "M6 0v10L0 5z" : "M0 0v10l6-5z"} fill="#76787c" /></svg>
              </NavTab>
            ))}
            <StudyTab $w={92} $active>Model</StudyTab>
            <StudyTab $w={142}>Motion Study 1</StudyTab>
            <StudyTab $w={28} aria-label="New study" />
          </StudyTabs>
        </LeftSide>

        <Center>
          <Viewport>
            <Model />
            <ViewTools>
              <Tools items={["lens", "lens2", "rotate", "section", "view", ".", "display", ".", "glasses", ".", "ball", "scene", ".", "settings", "."]} />
            </ViewTools>
            <DefinitionBox>
              <DefinitionButton>Edit Definition</DefinitionButton>
              <Icon name="keycard" />
            </DefinitionBox>
            <TaskTabs>
              {["resources", "web", "chat", "house", "books", "folder", "palette", "ball", "hand"].map((n) => (
                <TaskTab key={n} $active={n === "books"} aria-label={n}><Icon name={n} /></TaskTab>
              ))}
            </TaskTabs>
          </Viewport>
          <CenterFoot />
        </Center>

        <Library>
          <LibraryHead>
            <button aria-label="Collapse library">«</button>
            <LibraryTitle>Design Library</LibraryTitle>
            <IconButton $w={20} aria-label="Pin library"><Icon name="pin" size={22} /></IconButton>
          </LibraryHead>
          <LibraryTools>
            <Tools items={["booksAdd", "booksNew", "folderNew", "refresh"]} />
          </LibraryTools>
          <LibraryTree><Rows nodes={library} /></LibraryTree>
          <Thumbs>
            {thumbs.map((t) => (
              <Thumb key={t.label}>
                <svg width="50" height="50" viewBox="0 0 50 50" aria-hidden="true">{t.art}</svg>
                <ThumbLabel $on={t.on}>{t.label}</ThumbLabel>
              </Thumb>
            ))}
          </Thumbs>
        </Library>
      </Workspace>

      <FilterBar>
        <BarGrip />
        <BarLead>
          <IconButton aria-label="Toggle filters"><Icon name="fOff" /></IconButton>
          <IconButton aria-label="Clear filters"><Icon name="fClear" /></IconButton>
          <FilterAll>
            <LitButton aria-label="All filters"><Icon name="fAll" /></LitButton>
            <PressedButton aria-label="Select mode"><Icon name="cursor" /></PressedButton>
            <PressedMenu aria-label="Select mode options"><Caret /></PressedMenu>
          </FilterAll>
          <IconButton $w={24} aria-label="Invert selection"><Icon name="fCursor" size={24} /></IconButton>
        </BarLead>
        <FilterGrid>
          {filterShapes.map((s, i) => (
            <IconButton key={i} aria-label={`Filter ${i + 1}`}>
              <svg width="28" height="28" viewBox="0 0 28 28" aria-hidden="true">{s}<Blade /></svg>
            </IconButton>
          ))}
        </FilterGrid>
      </FilterBar>
      <StatusBar>
        <StatusText>SolidWorks Premium 2014 x64 Edition</StatusText>
        <Push />
        <StatusText>Under Defined</StatusText>
        <StatusText $gap={92}>Editing Assembly</StatusText>
        <StatusText $gap={32}>MMGS</StatusText>
        <StatusText $gap={30}><Caret /></StatusText>
        <StatusText $gap={76}><Icon name="statusHelp" size={24} /></StatusText>
        <Icon name="tag" />
      </StatusBar>
    </Page>
  );
}
